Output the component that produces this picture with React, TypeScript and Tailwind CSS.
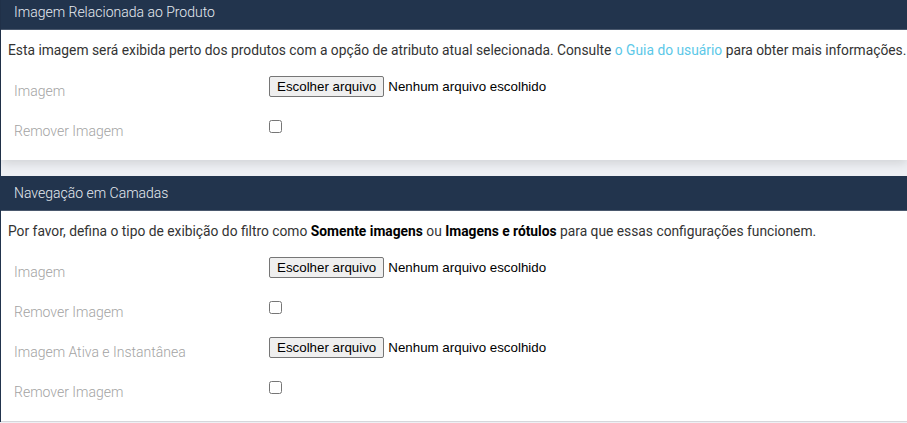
import type { ReactNode } from 'react'

const font = { fontFamily: 'Roboto, "Noto Sans", sans-serif' }

function FilePicker() {
  return (
    <div className="mt-[5px] flex items-center" style={{ fontFamily: '"Liberation Sans", Arial, sans-serif' }}>
      <button
        type="button"
        className="h-[21px] rounded-[2px] border border-[#767676] bg-[#efefef] px-[7px] text-[13.33px] leading-none text-black"
      >
        Escolher arquivo
      </button>
      <span className="ml-[4px] text-[13.33px] text-black">Nenhum arquivo escolhido</span>
    </div>
  )
}

function Row({ label, children }: { label: string; children: ReactNode }) {
  return (
    <div className="flex h-[40px] items-start">
      <div className="w-[261px] pl-[6px] pt-[10px] text-[14px] font-light leading-[20px] text-[#a3a3a3]">
        {label}
      </div>
      {children}
    </div>
  )
}

function Check() {
  return <input type="checkbox" className="m-0 mt-[9px] h-[13px] w-[13px]" />
}

function Panel({ title, children, last }: { title: string; children: ReactNode; last?: boolean }) {
  return (
    <section
      className={
        last
          ? 'border-b border-[#d6d7db] bg-white'
          : 'bg-white shadow-[0_3px_10px_rgba(0,0,0,0.13)]'
      }
    >
      <header className="flex h-[35px] items-center border-b border-[#4a586d] bg-[#22344d] px-[13px] text-[14px] font-light text-[#e6ebf1]">
        {title}
      </header>
      <div className="px-[7px] pb-[9px] pt-[10px]">{children}</div>
    </section>
  )
}

export default function App() {
  return (
    <div className="min-h-[423px] overflow-hidden bg-[#eef0f4]" style={font}>
      <div className="-mt-[5px] border-l border-[#22344d]">
        <Panel title="Imagem Relacionada ao Produto">
          <p className="mb-[11px] whitespace-nowrap text-[13.8px] leading-[20px] text-[#333]">
            Esta imagem será exibida perto dos produtos com a opção de atributo atual selecionada. Consulte{' '}
            <a className="text-[#5cc8e8]">o Guia do usuário</a> para obter mais informações.
          </p>
          <Row label="Imagem">
            <FilePicker />
          </Row>
          <Row label="Remover Imagem">
            <Check />
          </Row>
        </Panel>
        <div className="h-[16px]" />
        <Panel title="Navegação em Camadas" last>
          <p className="mb-[11px] whitespace-nowrap text-[13.8px] leading-[20px] text-[#333]">
            Por favor, defina o tipo de exibição do filtro como <b className="font-bold text-black">Somente imagens</b> ou{' '}
            <b className="font-bold text-black">Imagens e rótulos</b> para que essas configurações funcionem.
          </p>
          <Row label="Imagem">
            <FilePicker />
          </Row>
          <Row label="Remover Imagem">
            <Check />
          </Row>
          <Row label="Imagem Ativa e Instantânea">
            <FilePicker />
          </Row>
          <Row label="Remover Imagem">
            <Check />
          </Row>
        </Panel>
      </div>
    </div>
  )
}
